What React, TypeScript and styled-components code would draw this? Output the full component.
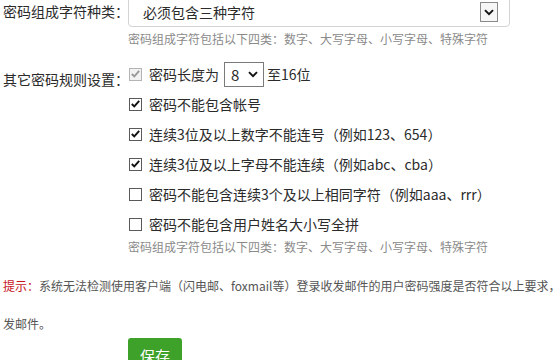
import styled, { createGlobalStyle } from 'styled-components';

const GlobalStyle = createGlobalStyle`
  html, body {
    margin: 0;
    padding: 0;
    overflow: hidden;
    background: #fff;
  }
  body {
    font-family: "Noto Sans CJK SC", "Noto Sans", sans-serif;
    color: #2b2b2b;
  }
`;

const Page = styled.div`
  width: 559px;
  height: 364px;
  padding-left: 3px;
  margin-top: -4px;
  box-sizing: border-box;
`;

const FormRow = styled.div`
  display: flex;
  align-items: flex-start;
`;

const Label = styled.div<{ $top: number }>`
  width: 125px;
  flex-shrink: 0;
  font-size: 14px;
  line-height: 20px;
  padding-top: ${(p) => p.$top}px;
  white-space: nowrap;
`;

const Field = styled.div`
  display: flex;
  flex-direction: column;
`;

const BigSelect = styled.div`
  width: 382px;
  height: 31px;
  border: 1px solid #d3d3d3;
  border-radius: 4px;
  box-sizing: border-box;
  display: flex;
  align-items: center;
  justify-content: space-between;
  padding: 0 11px 0 14px;
  font-size: 14px;
`;

const ArrowBox = styled.span`
  width: 18px;
  height: 20px;
  box-sizing: border-box;
  border: 1px solid #8a8a8a;
  background: #f6f6f6;
  display: flex;
  align-items: center;
  justify-content: center;
  margin-top: 1px;
`;

const Hint = styled.div<{ $top: number }>`
  font-size: 12px;
  line-height: 16px;
  color: #8a8a8a;
  margin-top: ${(p) => p.$top}px;
  white-space: nowrap;
`;

const Rules = styled.div`
  display: flex;
  flex-direction: column;
  margin-top: 12px;
`;

const RuleRow = styled.div`
  height: 30px;
  display: flex;
  align-items: center;
  font-size: 14px;
  white-space: nowrap;
  gap: 5px;
`;

const Box = styled.span<{ $disabled?: boolean }>`
  width: 13px;
  height: 13px;
  box-sizing: border-box;
  border: 1px solid ${(p) => (p.$disabled ? '#b4b4b4' : '#5a5a5a')};
  background: ${(p) => (p.$disabled ? '#f2f2f2' : '#fff')};
  display: flex;
  align-items: center;
  justify-content: center;
  margin-left: 1px;
  margin-right: 2px;
`;

const SmallSelect = styled.span`
  width: 40px;
  height: 25px;
  box-sizing: border-box;
  border: 1px solid #7a7a7a;
  display: flex;
  align-items: center;
  justify-content: space-between;
  padding: 0 5px 0 6px;
  font-size: 15px;
  margin-right: -2px;
`;

const Tip = styled.div`
  display: flex;
  flex-direction: column;
  gap: 18px;
  margin-top: 21px;
`;

const TipLine = styled.div`
  font-size: 12px;
  line-height: 20px;
  height: 20px;
  color: #555;
  white-space: nowrap;
`;

const TipMark = styled.span`
  color: #c8141e;
`;

const ButtonRow = styled.div`
  padding-left: 125px;
  margin-top: 4px;
`;

const SaveButton = styled.button`
  width: 54px;
  height: 36px;
  border: none;
  border-radius: 3px;
  background: #3da12a;
  color: #fff;
  font-family: "Noto Sans CJK SC", sans-serif;
  font-size: 15px;
  line-height: 36px;
  padding: 0;
`;

const Chevron = ({ size = 10, color = '#111' }: { size?: number; color?: string }) => (
  <svg width={size} height={size * 0.7} viewBox="0 0 10 7">
    <path d="M1 1.2 L5 5.2 L9 1.2" fill="none" stroke={color} strokeWidth="1.9" />
  </svg>
);

const CheckBox = ({ checked, disabled }: { checked?: boolean; disabled?: boolean }) => (
  <Box $disabled={disabled}>
    {checked && (
      <svg width="9" height="8" viewBox="0 0 9 8">
        <path
          d="M0.8 4 L3.3 6.4 L8.2 0.9"
          fill="none"
          stroke={disabled ? '#9a9a9a' : '#111'}
          strokeWidth="1.9"
        />
      </svg>
    )}
  </Box>
);

const rules = [
  { text: '密码不能包含帐号', checked: true },
  { text: '连续3位及以上数字不能连号（例如123、654）', checked: true },
  { text: '连续3位及以上字母不能连续（例如abc、cba）', checked: true },
  { text: '密码不能包含连续3个及以上相同字符（例如aaa、rrr）', checked: false },
  { text: '密码不能包含用户姓名大小写全拼', checked: false },
];

const HINT = '密码组成字符包括以下四类：数字、大写字母、小写字母、特殊字符';

export default function App() {
  return (
    <>
      <GlobalStyle />
      <Page>
        <FormRow>
          <Label $top={5}>密码组成字符种类：</Label>
          <Field>
            <BigSelect>
              <span>必须包含三种字符</span>
              <ArrowBox>
                <Chevron size={10} />
              </ArrowBox>
            </BigSelect>
            <Hint $top={4}>{HINT}</Hint>
          </Field>
        </FormRow>

        <FormRow>
          <Label $top={22}>其它密码规则设置：</Label>
          <Field>
            <Rules>
              <RuleRow>
                <CheckBox checked disabled />
                <span>密码长度为</span>
                <SmallSelect>
                  <span>8</span>
                  <Chevron size={10} />
                </SmallSelect>
                <span>至16位</span>
              </RuleRow>
              {rules.map((r) => (
                <RuleRow key={r.text}>
                  <CheckBox checked={r.checked} />
                  <span>{r.text}</span>
                </RuleRow>
              ))}
            </Rules>
            <Hint $top={0}>{HINT}</Hint>
          </Field>
        </FormRow>

        <Tip>
          <TipLine>
            <TipMark>提示：</TipMark>
            系统无法检测使用客户端（闪电邮、foxmail等）登录收发邮件的用户密码强度是否符合以上要求，
          </TipLine>
          <TipLine>发邮件。</TipLine>
        </Tip>

        <ButtonRow>
          <SaveButton>保存</SaveButton>
        </ButtonRow>
      </Page>
    </>
  );
}
